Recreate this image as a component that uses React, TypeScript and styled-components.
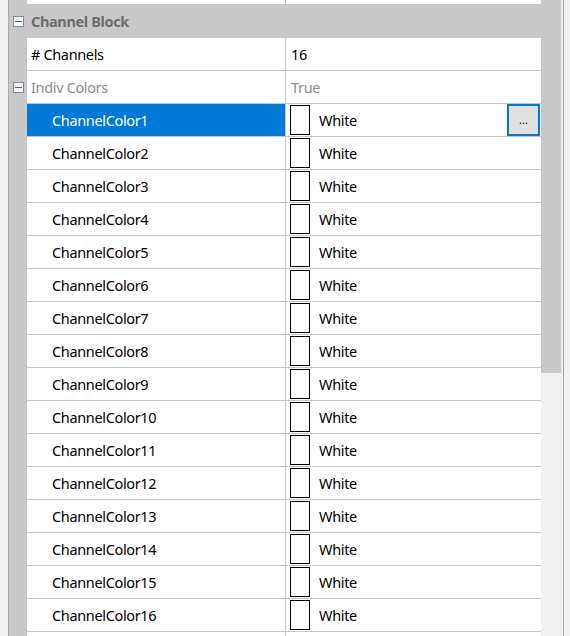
import React from "react";
import styled, { createGlobalStyle } from "styled-components";

const Global = createGlobalStyle`
  html, body { margin: 0; padding: 0; overflow: hidden; background: #f0f0f0; }
  * { box-sizing: border-box; }
`;

const Frame = styled.div`
  display: flex;
  width: 570px;
  height: 636px;
  overflow: hidden;
  background: #f0f0f0;
  font-family: "Segoe UI", "Noto Sans", "Open Sans", sans-serif;
  font-size: 14.5px;
  letter-spacing: -0.35px;
`;

const EdgeStrip = styled.div`
  width: 9px;
  flex: none;
  background: #f0f0f0;
  border-right: 1px solid #a9a9a9;
`;

const Grid = styled.div`
  width: 532px;
  flex: none;
  display: flex;
  flex-direction: column;
  background: #ffffff;
`;

const Row = styled.div<{ $h?: number; $category?: boolean }>`
  display: flex;
  flex: none;
  height: ${(p) => p.$h ?? 33}px;
  border-bottom: 1px solid #c8c8c8;
  background: ${(p) => (p.$category ? "#c8c8c8" : "#ffffff")};
`;

const Gutter = styled.div`
  width: 18px;
  flex: none;
  background: #c8c8c8;
  display: flex;
  align-items: center;
  justify-content: center;
`;

const Expander = styled.div`
  width: 11px;
  height: 11px;
  border: 1px solid #8a8a8a;
  background: #f7f7f7;
  display: flex;
  align-items: center;
  justify-content: center;
  &::after {
    content: "";
    width: 7px;
    height: 1px;
    background: #2f64c4;
  }
`;

const CategoryLabel = styled.div`
  flex: 1;
  display: flex;
  align-items: center;
  padding-left: 4px;
  font-weight: bold;
  color: #6d6d6d;
`;

const NameCell = styled.div<{ $indent: number; $selected?: boolean; $dim?: boolean }>`
  width: 258px;
  flex: none;
  display: flex;
  align-items: center;
  padding-left: ${(p) => p.$indent}px;
  background: ${(p) => (p.$selected ? "#0078d7" : "#ffffff")};
  color: ${(p) => (p.$selected ? "#ffffff" : p.$dim ? "#8d8d8d" : "#000000")};
  white-space: nowrap;
`;

const ValueCell = styled.div<{ $dim?: boolean }>`
  flex: 1;
  display: flex;
  align-items: center;
  padding-left: 4px;
  border-left: 1px solid #c8c8c8;
  color: ${(p) => (p.$dim ? "#8d8d8d" : "#000000")};
  white-space: nowrap;
`;

const ValueText = styled.span`
  padding-left: 1px;
`;

const Swatch = styled.div`
  width: 20px;
  height: 30px;
  flex: none;
  border: 1px solid #000000;
  background: #ffffff;
  margin-right: 9px;
`;

const EllipsisButton = styled.div`
  margin-left: auto;
  margin-right: 1px;
  width: 33px;
  height: 32px;
  flex: none;
  border: 2px solid #0078d7;
  background: #e1e1e1;
  display: flex;
  align-items: center;
  justify-content: center;
  font-size: 11px;
  letter-spacing: 0;
  color: #000;
  padding-bottom: 2px;
`;

const ScrollTrack = styled.div`
  width: 22px;
  flex: none;
  background: #f0f0f0;
`;

const Thumb = styled.div`
  width: 20px;
  height: 373px;
  background: #c8c8c8;
`;

const RightEdge = styled.div`
  flex: 1;
  background: #f0f0f0;
  border-left: 1px solid #a9a9a9;
`;

const channels = Array.from({ length: 16 }, (_, i) => `ChannelColor${i + 1}`);

export default function App() {
  return (
    <>
      <Global />
      <Frame>
        <EdgeStrip />
        <Grid>
          <Row $h={5}>
            <Gutter />
            <NameCell $indent={4} />
            <ValueCell />
          </Row>
          <Row $category>
            <Gutter>
              <Expander />
            </Gutter>
            <CategoryLabel>Channel Block</CategoryLabel>
          </Row>
          <Row>
            <Gutter />
            <NameCell $indent={4}># Channels</NameCell>
            <ValueCell>
              <ValueText>16</ValueText>
            </ValueCell>
          </Row>
          <Row>
            <Gutter>
              <Expander />
            </Gutter>
            <NameCell $indent={4} $dim>
              Indiv Colors
            </NameCell>
            <ValueCell $dim>
              <ValueText>True</ValueText>
            </ValueCell>
          </Row>
          {channels.map((name, i) => (
            <Row key={name}>
              <Gutter />
              <NameCell $indent={25} $selected={i === 0}>
                {name}
              </NameCell>
              <ValueCell>
                <Swatch />
                White
                {i === 0 && <EllipsisButton>...</EllipsisButton>}
              </ValueCell>
            </Row>
          ))}
          <Row>
            <Gutter />
            <NameCell $indent={4} />
            <ValueCell />
          </Row>
        </Grid>
        <ScrollTrack>
          <Thumb />
        </ScrollTrack>
        <RightEdge />
      </Frame>
    </>
  );
}
